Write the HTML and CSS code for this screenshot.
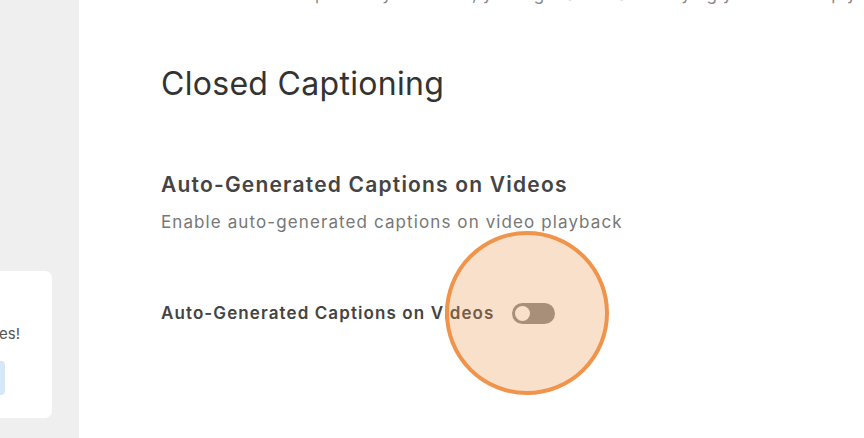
FILE: index.html
```html
<!DOCTYPE html>
<html>
<head>
<meta charset="utf-8">
<link rel="stylesheet" href="styles.css">
</head>
<body>
<div class="app">
  <aside class="sidebar">
    <div class="promo">
      <div class="promo-text">Unlock more features!</div>
      <div class="promo-btn">Upgrade</div>
    </div>
  </aside>
  <main class="main">
    <p class="prev-desc">When someone replies to your video, you'll get an email notifying you of the reply</p>
    <h1 class="section-title">Closed Captioning</h1>
    <h2 class="setting-title">Auto-Generated Captions on Videos</h2>
    <p class="setting-desc">Enable auto-generated captions on video playback</p>
    <div class="setting-row">
      <span class="row-label">Auto-Generated Captions on Videos</span>
      <span class="toggle"><span class="knob"></span></span>
    </div>
  </main>
</div>
<div class="highlight"></div>
</body>
</html>
```
FILE: styles.css
```css
* { box-sizing: border-box; }
html, body { margin: 0; padding: 0; }
body {
  width: 864px;
  height: 438px;
  overflow: hidden;
  font-family: Inter, "Noto Sans", sans-serif;
  background: #fff;
  position: relative;
}
.app {
  display: flex;
  height: 438px;
}
.sidebar {
  width: 79px;
  flex: none;
  background: #efefef;
  overflow: hidden;
  padding-top: 271px;
}
.promo {
  width: 222px;
  height: 147px;
  margin-left: -170px;
  background: #fff;
  border-radius: 7px;
  padding-top: 53px;
  padding-right: 32px;
  display: flex;
  flex-direction: column;
  align-items: flex-end;
}
.promo-text {
  font-size: 15px;
  line-height: 20px;
  color: #555;
  white-space: nowrap;
}
.promo-btn {
  margin-top: 17px;
  margin-right: 15px;
  width: 120px;
  height: 34px;
  background: #d6e7f8;
  border-radius: 4px;
  color: transparent;
  font-size: 14px;
}
.main {
  flex: 1;
  padding-left: 82px;
}
.prev-desc {
  margin: -18px 0 0 0;
  font-size: 17px;
  line-height: 24px;
  letter-spacing: 0.5px;
  color: #8a8a8a;
  white-space: nowrap;
}
.section-title {
  margin: 59px 0 0 0;
  font-size: 32px;
  line-height: 38px;
  font-weight: 400;
  letter-spacing: 0.3px;
  color: #333;
}
.setting-title {
  margin: 70px 0 0 0;
  font-size: 21px;
  line-height: 24px;
  font-weight: 600;
  letter-spacing: 1.2px;
  color: #444;
}
.setting-desc {
  margin: 15px 0 0 0;
  font-size: 17px;
  line-height: 20px;
  letter-spacing: 1.1px;
  color: #777;
}
.setting-row {
  margin-top: 70px;
  display: flex;
  align-items: center;
  gap: 18px;
  height: 22px;
}
.row-label {
  font-size: 17px;
  font-weight: 600;
  letter-spacing: 1.1px;
  color: #444;
}
.toggle {
  width: 43px;
  height: 21px;
  border-radius: 11px;
  background: #8b8b8b;
  display: flex;
  align-items: center;
  padding-left: 3px;
}
.knob {
  width: 15px;
  height: 15px;
  border-radius: 50%;
  background: #fff;
}
.highlight {
  position: absolute;
  left: 445px;
  top: 231px;
  width: 164px;
  height: 164px;
  border-radius: 50%;
  border: 4px solid #f0944b;
  background: rgba(235, 152, 82, 0.3);
}
```
